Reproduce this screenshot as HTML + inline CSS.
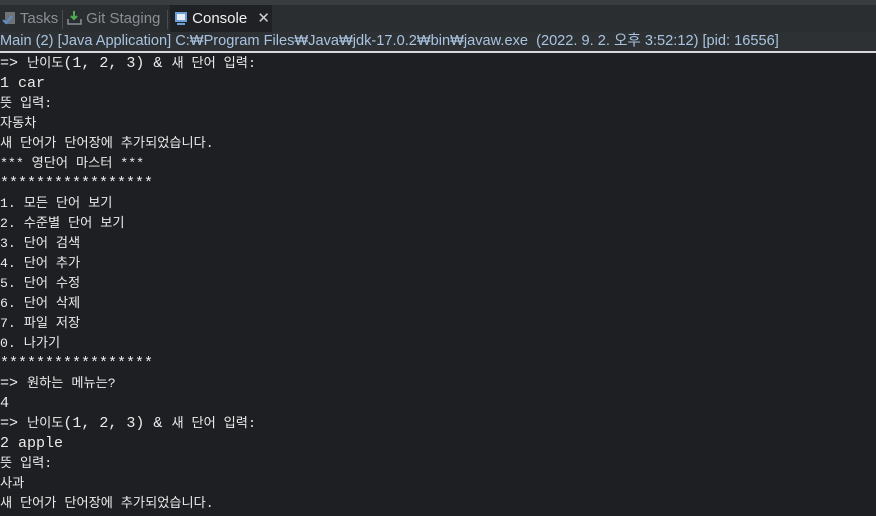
<!DOCTYPE html>
<html><head><meta charset="utf-8"><style>
body{margin:0;width:876px;height:516px;overflow:hidden;background:#1d1f22;font-family:"Liberation Sans","Noto Sans CJK KR",sans-serif}
.top{position:absolute;left:0;top:0;width:876px;height:5px;background:#3a3d40}
.tabs{position:absolute;left:0;top:5px;width:876px;height:27px;background:#2b2e31}
.tab{position:absolute;top:0;height:27px;line-height:27px;font-size:15px;color:#8a8f94}
.sep{position:absolute;top:5px;width:1px;height:19px;background:#4a4d50}
.info{position:absolute;left:0;top:32px;width:876px;height:19px;background:#2e3134;color:#a9c3e0;font-size:14.6px;line-height:19px;white-space:pre}
.rule{position:absolute;left:0;top:51px;width:876px;height:2px;background:#d8d8d8}
.con{position:absolute;left:0;top:54px;color:#ebebeb;font-family:"Liberation Mono","Noto Sans CJK KR",monospace;font-size:15px;line-height:20px;white-space:pre}
.k{font-size:13.2px}
</style></head><body>
<div class="top"></div>
<div class="tabs">
 <div class="tab" style="left:2px"><svg width="14" height="14" style="vertical-align:-2px"><rect x="3" y="1" width="10" height="12" fill="#6e7378"/><path d="M1 9l3 3 6-7" stroke="#5a8ec6" stroke-width="2" fill="none"/></svg> Tasks</div>
 <div class="sep" style="left:62px"></div>
 <div class="tab" style="left:67px"><svg width="15" height="15" style="vertical-align:-2px"><path d="M7 1v8M4 6l3 3 3-3" stroke="#4caf50" stroke-width="2" fill="none"/><path d="M1 9v5h13V9" stroke="#8a8f94" stroke-width="1.5" fill="none"/></svg> Git Staging</div>
 <div class="sep" style="left:167px"></div>
 <div class="tab" style="left:170px;width:102px;background:#1f2124;color:#f0f0f0"><svg width="14" height="14" style="vertical-align:-2px;margin-left:4px"><rect x="1" y="1" width="12" height="10" fill="#6f9fd8"/><rect x="3" y="3" width="8" height="6" fill="#e8eef8"/><rect x="3" y="12" width="8" height="2" fill="#6f9fd8"/></svg> Console <span style="color:#cfcfcf;margin-left:6px">✕</span></div>
</div>
<div class="info">Main (2) [Java Application] C:₩Program Files₩Java₩jdk-17.0.2₩bin₩javaw.exe  (2022. 9. 2. 오후 3:52:12) [pid: 16556]</div>
<div class="rule"></div>
<div class="con">=> <span class="k">난이도</span>(1, 2, 3) & <span class="k">새 단어 입력:</span>
1 car
<span class="k">뜻 입력:</span>
<span class="k">자동차</span>
<span class="k">새 단어가 단어장에 추가되었습니다.</span>
<span class="k">*** 영단어 마스터 ***</span>
*****************
<span class="k">1. 모든 단어 보기</span>
<span class="k">2. 수준별 단어 보기</span>
<span class="k">3. 단어 검색</span>
<span class="k">4. 단어 추가</span>
<span class="k">5. 단어 수정</span>
<span class="k">6. 단어 삭제</span>
<span class="k">7. 파일 저장</span>
<span class="k">0. 나가기</span>
*****************
=> <span class="k">원하는 메뉴는?</span>
4
=> <span class="k">난이도</span>(1, 2, 3) & <span class="k">새 단어 입력:</span>
2 apple
<span class="k">뜻 입력:</span>
<span class="k">사과</span>
<span class="k">새 단어가 단어장에 추가되었습니다.</span></div>
</body></html>
